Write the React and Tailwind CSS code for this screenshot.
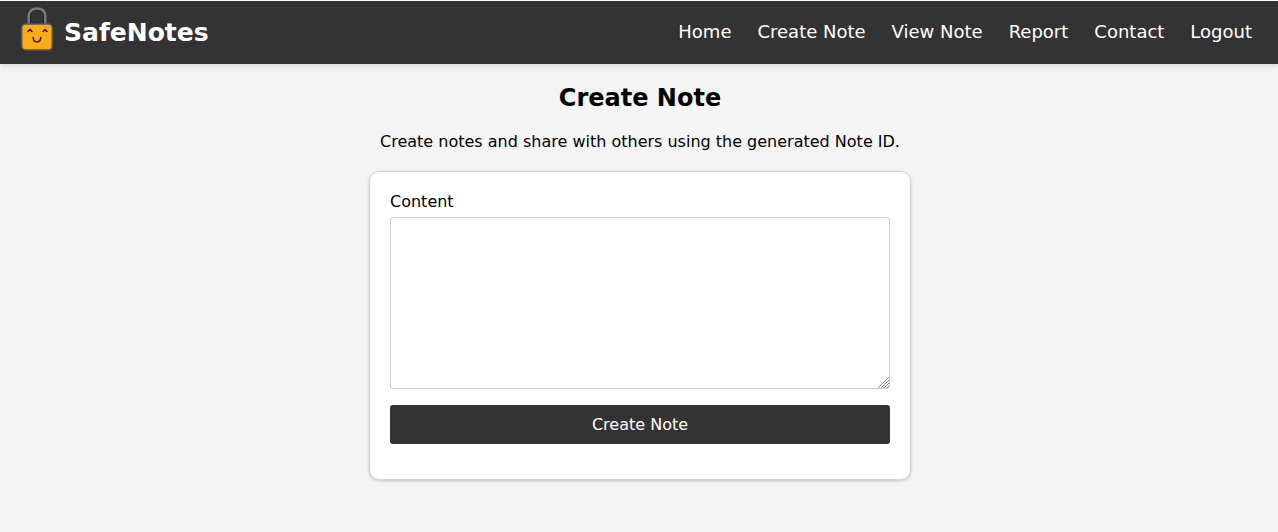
import React from 'react';

const NAV_LINKS = ['Home', 'Create Note', 'View Note', 'Report', 'Contact', 'Logout'];
const SHACKLE = 'M10 20V10C10 5 13 2.800 18 2.800s8 2.200 8 7.200V20';

function LockLogo() {
    return (
        <svg width="36" height="54" viewBox="0 0 36 54" className="shrink-0">
            <path d={SHACKLE} fill="none" stroke="#7a7a7a" strokeWidth="3" />
            <path d="M11.500 20V10C11.500 6 14 4.300 18 4.300s6.500 1.700 6.500 5.700V20" fill="none" stroke="#222222" strokeWidth="1" />
            <rect x="2.700" y="18" width="30.600" height="26" rx="4" fill="#fbaa19" stroke="#555555" strokeWidth="1.500" />
            <path d="M9 25.500l2-2 2 2M24 25.500l2-2 2 2M14.200 31.500c.5 6 7.100 6 7.600 0" fill="none" stroke="#222" strokeWidth="1.500" strokeLinecap="round" strokeLinejoin="round" />
        </svg>
    );
}

function ResizeGrip() {
    return (
        <svg width="11" height="11" viewBox="0 0 11 11" className="absolute right-px bottom-px pointer-events-none">
            <path d="M0 11L11 0M3 11L11 3M6 11L11 6M9 11L11 9" fill="none" stroke="#8c8c8c" strokeWidth="1" />
        </svg>
    );
}

export default function App() {
    return (
        <div className="min-h-[532px] bg-[#f4f4f4] text-black font-['DejaVu_Sans',sans-serif]">
            {/* Header */}
            <header className="mt-px h-[63px] flex items-center justify-between bg-[#333333] pl-[19px] pr-[26px] text-white shadow-[0_2px_5px_rgba(0,0,0,0.1)]">
                <div className="flex items-center gap-[9px]">
                    <LockLogo />
                    <span className="text-[25px] font-bold">SafeNotes</span>
                </div>
                <nav className="flex items-center gap-[26px] pb-[2px] text-[18px]">
                    {NAV_LINKS.map(link => <a key={link} href="#">{link}</a>)}
                </nav>
            </header>

            {/* Form */}
            <main className="flex flex-col items-center pl-[2px]">
                <h1 className="mt-[18px] text-2xl font-bold leading-[32px]">Create Note</h1>
                <p className="mt-[16px] text-base leading-[24px]">Create notes and share with others using the generated Note ID.</p>
                <div className="mt-[17px] w-[542px] h-[309px] rounded-[10px] border border-[#d4d4d4] bg-white px-5 pt-5 shadow-[0_1px_3px_rgba(0,0,0,0.2)]">
                    <label className="block text-base leading-[19px]">Content</label>
                    <div className="relative mt-[6px]">
                        <textarea className="block w-full h-[172px] resize-none rounded-[3px] border border-[#cccccc] bg-white" />
                        <ResizeGrip />
                    </div>
                    <button className="mt-4 w-full h-[39px] rounded-[3px] bg-[#333333] text-base text-white">Create Note</button>
                </div>
            </main>
        </div>
    );
}
